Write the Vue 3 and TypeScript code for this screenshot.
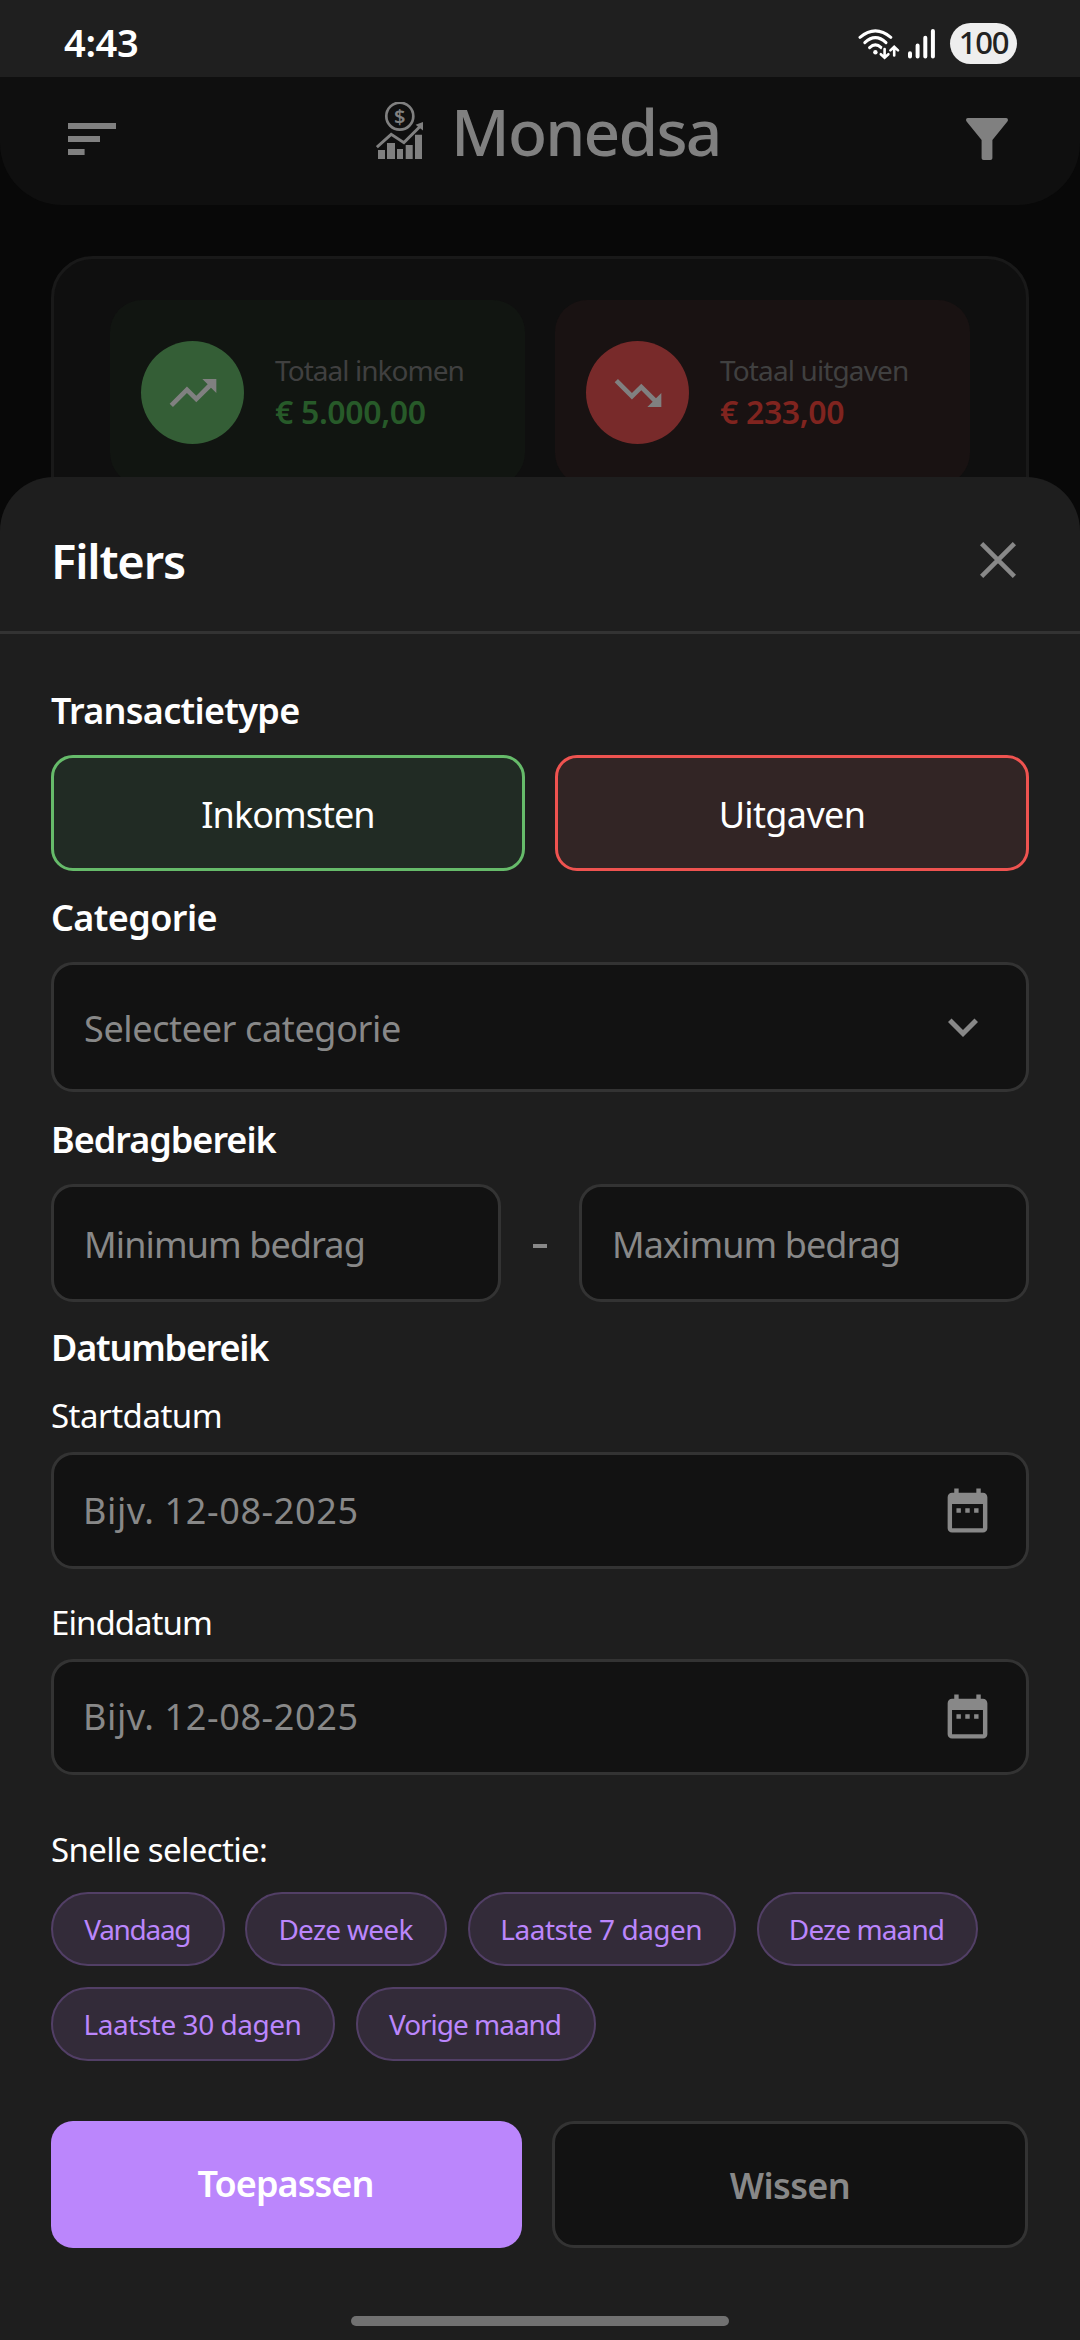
<script setup lang="ts">
import { ref } from 'vue'

interface QuickOption {
  label: string
  width: number
  tracking: number
}

const quickRows: QuickOption[][] = [
  [
    { label: 'Vandaag', width: 173.5, tracking: -1.31 },
    { label: 'Deze week', width: 202, tracking: -0.72 },
    { label: 'Laatste 7 dagen', width: 268.5, tracking: -0.5 },
    { label: 'Deze maand', width: 221, tracking: -0.9 },
  ],
  [
    { label: 'Laatste 30 dagen', width: 284, tracking: -0.47 },
    { label: 'Vorige maand', width: 240, tracking: -1.02 },
  ],
]

const minAmount = ref('')
const maxAmount = ref('')
</script>

<template>
  <div class="screen">
    <div class="status">
      <span class="time">4:43</span>
      <div class="status-icons">
        <svg class="wifi" width="46" height="36" viewBox="855 25 46 36" fill="none" stroke="#fff" stroke-width="3" stroke-linecap="round">
          <path d="M860 36.3Q875.4 23.5 890.8 36.3" />
          <path d="M864.8 41.6Q875.4 31.6 886 41.6" />
          <path d="M869.6 46.6Q875.4 41 881.2 46.6" />
          <circle cx="875.4" cy="51.2" r="2.2" fill="#fff" stroke="none" />
          <g stroke="#1f1f1f" stroke-width="6"><path d="M884.6 48.5V56" /></g>
          <g stroke-width="2.6">
            <path d="M884.6 48V56.5M880.8 53.2l3.8 3.6 3.8-3.6" />
            <path d="M894.2 54.5V46.5M890.4 49.4l3.8-3.6 3.8 3.6" />
          </g>
        </svg>
        <svg class="signal" width="27" height="30" viewBox="908 29 27 30" stroke="#fff" stroke-width="4" stroke-linecap="round">
          <path d="M910 53.2V56.4M917.6 45.4V56.4M925.3 37.8V56.4M932.9 31V56.4" />
        </svg>
        <span class="battery">100</span>
      </div>
    </div>

    <header class="topbar">
      <svg class="menu" width="48" height="32" viewBox="0 0 48 32" fill="#808080">
        <rect width="48" height="6" /><rect y="13" width="32" height="6" /><rect y="26" width="16.6" height="6" />
      </svg>
      <div class="brand">
        <svg class="logo" width="48" height="58" viewBox="0 0 48 58" fill="#808080">
          <circle cx="23.8" cy="14.2" r="13.5" fill="none" stroke="#808080" stroke-width="2.7" />
          <text x="23.8" y="21.6" text-anchor="middle" class="coin">$</text>
          <path d="M.9 45.2 15.2 32.4 27.9 40.6 44 24.5" fill="none" stroke="#808080" stroke-width="2.9" />
          <path d="M39.6 22.8 47 20V28.4z" />
          <path d="M2 48h7v9H2zM11 41h8v16h-8zM21 47h6v10h-6zM29.7 43h7v14h-7zM39 32.8h7V57h-7z" />
        </svg>
        <span class="name">Monedsa</span>
      </div>
      <svg class="funnel" width="42" height="42" viewBox="0 0 42 42" fill="#808080">
        <path d="M1.8 0H40.2C42 0 42.4 2.2 41.4 3.6L26.4 22V39.8C26.4 41.2 25.6 42 24.4 42H17.6C16.4 42 15.6 41.2 15.6 39.8V22L.6 3.6C-.4 2.2 0 0 1.8 0z" />
      </svg>
    </header>

    <section class="summary">
      <div class="tile income">
        <span class="disc">
          <svg width="56" height="56" viewBox="0 0 24 24" fill="#808080"><path d="M16 6l2.29 2.29-4.88 4.88-4-4L2 16.59 3.41 18l6-6 4 4 6.3-6.29L22 12V6z" /></svg>
        </span>
        <div class="figures">
          <span class="caption">Totaal inkomen</span>
          <span class="amount">€ 5.000,00</span>
        </div>
      </div>
      <div class="tile expense">
        <span class="disc">
          <svg width="56" height="56" viewBox="0 0 24 24" fill="#808080"><path d="M16 18l2.29-2.29-4.88-4.88-4 4L2 7.41 3.41 6l6 6 4-4 6.3 6.29L22 12v6z" /></svg>
        </span>
        <div class="figures">
          <span class="caption">Totaal uitgaven</span>
          <span class="amount">€ 233,00</span>
        </div>
      </div>
    </section>

    <section class="sheet">
      <div class="sheet-head">
        <h1>Filters</h1>
        <svg width="36" height="36" viewBox="0 0 36 36" stroke="#888" stroke-width="4.6"><path d="M1.6 1.6 34.4 34.4M34.4 1.6 1.6 34.4" /></svg>
      </div>

      <div class="body">
        <h2 class="t-type">Transactietype</h2>
        <div class="types">
          <button class="type in">Inkomsten</button>
          <button class="type out">Uitgaven</button>
        </div>

        <h2 class="t-cat">Categorie</h2>
        <div class="field select">
          <span>Selecteer categorie</span>
          <svg width="60" height="60" viewBox="0 0 24 24" fill="#888"><path d="M7.41 8.58 12 13.17l4.59-4.59L18 10l-6 6-6-6z" /></svg>
        </div>

        <h2 class="t-amount">Bedragbereik</h2>
        <div class="range">
          <input v-model="minAmount" class="field amount-input min" placeholder="Minimum bedrag" />
          <i class="dash"></i>
          <input v-model="maxAmount" class="field amount-input max" placeholder="Maximum bedrag" />
        </div>

        <h2 class="t-date">Datumbereik</h2>
        <label class="t-start">Startdatum</label>
        <div class="field date">
          <span>Bijv. 12-08-2025</span>
          <svg width="53" height="53" viewBox="0 0 24 24" fill="#888"><path d="M9 11H7v2h2v-2zm4 0h-2v2h2v-2zm4 0h-2v2h2v-2zm2-7h-1V2h-2v2H8V2H6v2H5c-1.11 0-1.99.9-1.99 2L3 20c0 1.1.89 2 2 2h14c1.1 0 2-.9 2-2V6c0-1.1-.9-2-2-2zm0 16H5V9h14v11z" /></svg>
        </div>
        <label class="t-end">Einddatum</label>
        <div class="field date">
          <span>Bijv. 12-08-2025</span>
          <svg width="53" height="53" viewBox="0 0 24 24" fill="#888"><path d="M9 11H7v2h2v-2zm4 0h-2v2h2v-2zm4 0h-2v2h2v-2zm2-7h-1V2h-2v2H8V2H6v2H5c-1.11 0-1.99.9-1.99 2L3 20c0 1.1.89 2 2 2h14c1.1 0 2-.9 2-2V6c0-1.1-.9-2-2-2zm0 16H5V9h14v11z" /></svg>
        </div>

        <label class="t-quick">Snelle selectie:</label>
        <div class="chips">
          <div v-for="(row, r) in quickRows" :key="r" class="chip-row">
            <button
              v-for="o in row"
              :key="o.label"
              class="chip"
              :style="{ width: o.width + 'px', letterSpacing: o.tracking + 'px' }"
            >{{ o.label }}</button>
          </div>
        </div>

        <div class="actions">
          <button class="apply">Toepassen</button>
          <button class="clear">Wissen</button>
        </div>
      </div>
      <div class="home-bar"></div>
    </section>
  </div>
</template>

<style>
body {
  background: #080808;
}
</style>

<style scoped>
.screen {
  position: relative;
  width: 1080px;
  height: 2340px;
  overflow: hidden;
  background: #080808;
  color: #fff;
  font-family: 'Noto Sans', sans-serif;
}
svg {
  display: block;
  flex: none;
}
button,
input {
  box-sizing: border-box;
  margin: 0;
  padding: 0;
  border: 0;
  outline: 0;
  color: inherit;
  font: inherit;
  white-space: nowrap;
}

.status {
  display: flex;
  align-items: center;
  justify-content: space-between;
  box-sizing: border-box;
  height: 77px;
  padding: 10px 63px 0 64px;
  background: #1f1f1f;
}
.time {
  margin-top: -4px;
  font-size: 38px;
  font-weight: 600;
  line-height: 40px;
  letter-spacing: -0.32px;
}
.status-icons {
  display: flex;
  align-items: center;
}
.signal {
  margin-left: 7px;
}
.battery {
  width: 67px;
  height: 41px;
  margin-left: 15px;
  border-radius: 21px;
  background: #eee;
  color: #222;
  font-size: 31px;
  font-weight: 500;
  line-height: 39px;
  letter-spacing: -1.2px;
  text-align: center;
}

.topbar {
  display: flex;
  align-items: center;
  box-sizing: border-box;
  height: 128px;
  padding: 0 72px 4px 68px;
  border-radius: 0 0 62px 62px;
  background: #0f0f0f;
}
.brand {
  display: flex;
  align-items: center;
  margin: -17px 0 0 260px;
}
.coin {
  font-size: 20px;
  font-weight: 600;
}
.name {
  margin-left: 27px;
  padding-top: 2px;
  color: #808080;
  font-size: 64px;
  font-weight: 500;
  line-height: 64px;
  letter-spacing: -1.8px;
}
.funnel {
  margin-left: auto;
}

.summary {
  display: flex;
  gap: 30px;
  box-sizing: border-box;
  width: 978px;
  height: 400px;
  margin: 51px auto 0;
  padding: 41px 56px;
  border: 3px solid #191919;
  border-radius: 42px;
  background: #0f0f0f;
}
.tile {
  display: flex;
  flex: 1;
  align-items: center;
  box-sizing: border-box;
  height: 185px;
  padding-left: 31px;
  border-radius: 32px;
}
.income {
  background: #111511;
}
.expense {
  background: #191212;
}
.disc {
  display: flex;
  align-items: center;
  justify-content: center;
  width: 103px;
  height: 103px;
  border-radius: 50%;
}
.income .disc {
  background: #345e36;
}
.expense .disc {
  background: #782a2a;
}
.figures {
  display: flex;
  flex-direction: column;
  gap: 2px;
  margin: -2px 0 0 31px;
  white-space: nowrap;
}
.caption {
  color: #404040;
  font-size: 28px;
  line-height: 38px;
  letter-spacing: -0.95px;
}
.expense .caption {
  letter-spacing: -0.87px;
}
.amount {
  font-size: 32px;
  font-weight: 600;
  line-height: 42px;
  letter-spacing: -0.35px;
}
.income .amount {
  color: #275a29;
}
.expense .amount {
  color: #80241f;
}

.sheet {
  position: absolute;
  top: 477px;
  right: 0;
  bottom: 0;
  left: 0;
  border-radius: 54px 54px 0 0;
  background: #1e1e1e;
}
.sheet-head {
  display: flex;
  align-items: center;
  justify-content: space-between;
  box-sizing: border-box;
  height: 157px;
  padding: 12px 64px 0 51px;
  border-bottom: 3px solid #333;
}
h1 {
  margin: 0;
  padding-top: 1px;
  font-size: 47px;
  font-weight: 600;
  line-height: 48px;
  letter-spacing: -1.15px;
}
.body {
  padding: 53px 51px 0;
}
h2 {
  margin: 0 0 20px;
  font-size: 36px;
  font-weight: 600;
  line-height: 48px;
  letter-spacing: -0.7px;
}
.t-cat {
  margin-top: 23px;
  letter-spacing: -0.6px;
}
.t-amount {
  margin-top: 24px;
  letter-spacing: -1px;
}
.t-date {
  margin-top: 22px;
  letter-spacing: -1.2px;
}
.types {
  display: flex;
  gap: 30px;
}
.type {
  flex: 1;
  height: 116px;
  padding-top: 2px;
  border: 3px solid;
  border-radius: 22px;
  font-size: 36px;
}
.type.in {
  border-color: #66bb6a;
  background: #212b24;
  letter-spacing: -0.96px;
}
.type.out {
  border-color: #ef5350;
  background: #322525;
  letter-spacing: -0.65px;
}
.field {
  display: flex;
  align-items: center;
  justify-content: space-between;
  box-sizing: border-box;
  border: 3px solid #333;
  border-radius: 22px;
  background: #121212;
  color: #888;
  font-size: 36px;
}
.select {
  height: 130px;
  padding: 0 33px 0 30px;
  letter-spacing: -0.37px;
}
.select span {
  padding-top: 2px;
}
.range {
  display: flex;
  align-items: center;
  justify-content: space-between;
}
.amount-input {
  width: 450px;
  height: 118px;
  padding: 2px 28px 0 30px;
}
.amount-input::placeholder {
  color: #888;
  opacity: 1;
}
.min {
  letter-spacing: -0.9px;
}
.max {
  letter-spacing: -0.93px;
}
.dash {
  width: 14px;
  height: 4px;
  margin-top: 6px;
  background: #888;
}
.date {
  height: 116.5px;
  padding: 0 32px 0 29px;
  letter-spacing: 0.62px;
}
label {
  display: block;
  margin-bottom: 14px;
  font-size: 33px;
  line-height: 44px;
}
.t-start {
  padding-top: 2px;
  letter-spacing: -0.5px;
}
.t-end {
  margin-top: 32px;
  letter-spacing: -0.96px;
}
.t-quick {
  margin: 53px 0 20px;
  letter-spacing: -0.65px;
}
.chips {
  display: flex;
  flex-direction: column;
  gap: 21px;
}
.chip-row {
  display: flex;
  gap: 20.5px;
}
.chip {
  height: 74px;
  padding: 0 1px 1px 0;
  border: 2.5px solid #523f66;
  border-radius: 37px;
  background: #332b39;
  color: #bb86fc;
  font-size: 28px;
  text-align: center;
}
.actions {
  display: flex;
  gap: 30px;
  margin-top: 60px;
}
.apply,
.clear {
  height: 127px;
  border-radius: 22px;
  font-size: 36px;
  font-weight: 600;
}
.apply {
  width: 471px;
  padding: 0 2px 3px 0;
  background: #bb86fc;
  letter-spacing: -0.92px;
}
.clear {
  width: 476px;
  padding-top: 1px;
  border: 3px solid #333;
  background: #121212;
  color: #888;
  letter-spacing: -0.61px;
}
.home-bar {
  width: 378px;
  height: 10px;
  margin: 68px auto 0;
  border-radius: 5px;
  background: #717171;
}
</style>
